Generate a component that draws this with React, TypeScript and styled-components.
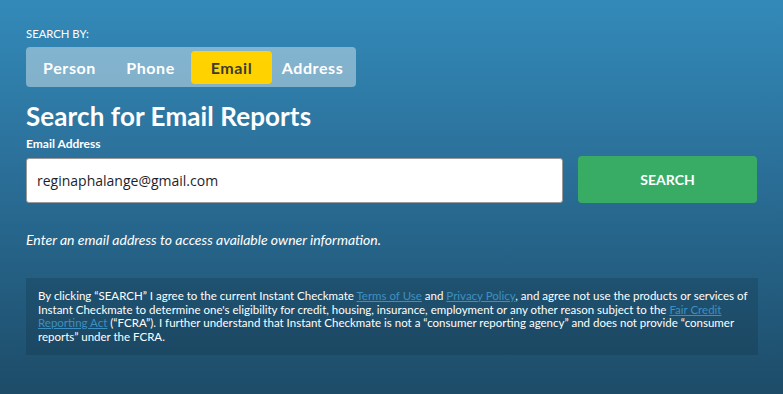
import React, { useState } from 'react';
import styled, { createGlobalStyle } from 'styled-components';

const GlobalStyle = createGlobalStyle`
  html, body {
    margin: 0;
    padding: 0;
  }
  body {
    font-family: Lato, "Liberation Sans", sans-serif;
    background: #1d4c68;
  }
  * {
    box-sizing: border-box;
  }
`;

// Fond dégradé bleu
const Page = styled.main`
  width: 783px;
  height: 394px;
  overflow: hidden;
  background: linear-gradient(180deg, #338ab9 0%, #2a6e97 45%, #1d4c68 100%);
  padding: 27px 26px 0 26px;
  color: #fff;
`;

const SearchByLabel = styled.div`
  font-size: 11.3px;
  line-height: 13px;
  text-transform: uppercase;
  margin-bottom: 7px;
`;

// Sélecteur de type de recherche
const Tabs = styled.div`
  display: inline-flex;
  align-items: center;
  height: 40px;
  padding: 0 3px;
  border-radius: 4px;
  background: rgba(255, 255, 255, 0.4);
`;

const Tab = styled.button<{ $active?: boolean }>`
  width: 81px;
  height: 33px;
  padding: 0;
  border: none;
  border-radius: 4px;
  font-family: Lato, "Liberation Sans", sans-serif;
  font-size: 16px;
  font-weight: 700;
  letter-spacing: 0.6px;
  cursor: pointer;
  color: ${({ $active }) => ($active ? '#3d3a36' : '#fff')};
  background: ${({ $active }) => ($active ? '#ffd200' : 'transparent')};
`;

const Title = styled.h1`
  margin: 13px 0 0;
  font-size: 26px;
  line-height: 32px;
  font-weight: 700;
  letter-spacing: 0.1px;
`;

const FieldLabel = styled.label`
  display: block;
  margin-top: 5px;
  font-size: 12px;
  line-height: 14px;
  font-weight: 700;
`;

const FormRow = styled.div`
  display: flex;
  align-items: flex-end;
  gap: 15px;
  margin-top: 5px;
`;

const Input = styled.input`
  width: 537px;
  height: 45px;
  border: 1px solid #9a9a9a;
  border-radius: 3px;
  padding: 0 10px;
  font-family: "Open Sans", sans-serif;
  font-size: 14px;
  color: #1e1e2a;
  background: #fff;
  outline: none;
`;

const SearchButton = styled.button`
  width: 179px;
  height: 47px;
  border: none;
  border-radius: 4px;
  background: #38ac64;
  color: #fff;
  font-family: Lato, "Liberation Sans", sans-serif;
  font-size: 14px;
  font-weight: 700;
  cursor: pointer;
`;

const Hint = styled.p`
  margin: 29px 0 0;
  font-size: 14px;
  line-height: 16px;
  font-style: italic;
`;

// Mentions légales
const Disclaimer = styled.div`
  margin-top: 30px;
  width: 732px;
  padding: 11px 6px 12px 12px;
  background: rgba(0, 0, 0, 0.12);
  font-size: 11.5px;
  line-height: 13.5px;
`;

const Link = styled.a`
  color: #3e8fc0;
  text-decoration: underline;
`;

const tabs = ['Person', 'Phone', 'Email', 'Address'];

export default function App() {
  const [active, setActive] = useState('Email');
  const [email, setEmail] = useState('reginaphalange@gmail.com');

  return (
    <>
      <GlobalStyle />
      <Page>
        <SearchByLabel>Search by:</SearchByLabel>
        <Tabs>
          {tabs.map((t) => (
            <Tab key={t} $active={t === active} onClick={() => setActive(t)}>
              {t}
            </Tab>
          ))}
        </Tabs>
        <Title>Search for Email Reports</Title>
        <FieldLabel htmlFor="email">Email Address</FieldLabel>
        <FormRow>
          <Input id="email" value={email} onChange={(e) => setEmail(e.target.value)} />
          <SearchButton>SEARCH</SearchButton>
        </FormRow>
        <Hint>Enter an email address to access available owner information.</Hint>
        <Disclaimer>
          By clicking “SEARCH” I agree to the current Instant Checkmate <Link href="#">Terms of Use</Link> and{' '}
          <Link href="#">Privacy Policy</Link>, and agree not use the products or services of Instant Checkmate to
          determine one's eligibility for credit, housing, insurance, employment or any other reason subject to the{' '}
          <Link href="#">Fair Credit Reporting Act</Link> (“FCRA”). I further understand that Instant Checkmate is not a
          “consumer reporting agency” and does not provide “consumer reports” under the FCRA.
        </Disclaimer>
      </Page>
    </>
  );
}
